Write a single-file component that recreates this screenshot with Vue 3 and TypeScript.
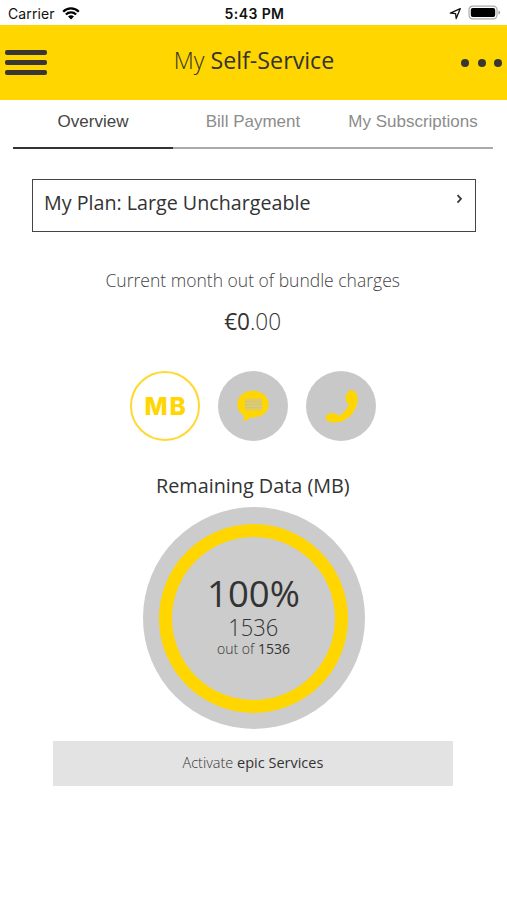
<script setup lang="ts">
interface Tab { label: string; active: boolean }
const tabs: Tab[] = [
  { label: 'Overview', active: true },
  { label: 'Bill Payment', active: false },
  { label: 'My Subscriptions', active: false },
]
</script>

<template>
  <main class="screen">
    <div class="status">
      <div class="carrier">
        <span>Carrier</span>
        <svg width="18" height="13" viewBox="0 0 18 13">
          <path d="M1.2 4.7a11 11 0 0 1 15.6 0M3.9 7.5a7.2 7.2 0 0 1 10.2 0" fill="none" stroke="#000" stroke-width="2.3" />
          <path d="M9 12.6 6 9.6a4.3 4.3 0 0 1 6 0z" />
        </svg>
      </div>
      <span class="time">5:43 PM</span>
      <div class="indicators">
        <svg width="13" height="13" viewBox="0 0 13 13"><path d="M1.3 6.1 11.3 1.6 7.2 11.6 6.6 6.6z" fill="none" stroke="#111" stroke-width="1.3" stroke-linejoin="round" /></svg>
        <svg width="33" height="16" viewBox="0 0 33 16">
          <rect x="1" y="1.2" width="28" height="12.6" rx="3.6" fill="#fff" stroke="#aaa" stroke-width="1.2" />
          <rect x="2.8" y="3" width="24.4" height="9" rx="2" />
          <path d="M30.5 5.6q1.6.5 1.6 1.9t-1.6 1.9z" fill="#999" />
        </svg>
      </div>
    </div>

    <header class="header">
      <button class="menu" aria-label="Menu"><i /><i /><i /></button>
      <h1><span class="fit"><span class="thin">My</span> Self-Service</span></h1>
      <button class="more" aria-label="More"><i /><i /><i /></button>
    </header>

    <nav class="tabs">
      <a v-for="tab in tabs" :key="tab.label" class="tab" :class="{ active: tab.active }">{{ tab.label }}</a>
    </nav>

    <section class="plan">
      <span class="fit">My Plan: Large Unchargeable</span>
      <svg width="7" height="10" viewBox="0 0 7 10"><path d="M1.5 1.2 5 4.8 1.5 8.6" fill="none" stroke="#333" stroke-width="1.7" /></svg>
    </section>

    <p class="charges"><span class="fit">Current month out of bundle charges</span></p>
    <p class="amount"><span class="fit"><b>€0</b>.00</span></p>

    <div class="kinds">
      <button class="kind selected">MB</button>
      <button class="kind" aria-label="Messages">
        <svg width="36" height="36" viewBox="0 0 36 36">
          <path d="M18 2.8c8.7 0 15.7 5.8 15.7 13.5S27 29.500 18 29.500q-1.600 0-3-.2-1.500 3.500-7.500 3.800 2.200-2 1.500-5.500C4.500 25 2.300 21 2.300 16.300 2.300 8.600 9.300 2.800 18 2.800z" fill="#ffd600" />
          <path d="M10 10.500h17v12H10z" fill="#dfcb62" />
          <path d="M10 13.500h17M10 16.500h17M10 19.500h17" stroke="#cdc38b" />
        </svg>
      </button>
      <button class="kind" aria-label="Calls">
        <svg width="36" height="36" viewBox="0 0 36 36"><path d="M27.500 2.300C31.500 1.500 35 5.500 34.600 12 34 24 24 34 12 34.500 6 34.700 2.500 32.500 2.600 29.500 2.700 26.500 5 25.600 9 25.200 12.500 25 14 25.500 15.500 28 20 26 24.500 21 26 16 23 14.500 22 12.500 22.800 9 23.600 5 25 2.800 27.500 2.300z" fill="#ffd600" /></svg>
      </button>
    </div>

    <h2 class="remaining"><span class="fit">Remaining Data (MB)</span></h2>
    <div class="gauge">
      <div class="ring">
        <p class="percent">100%</p>
        <p class="left"><span class="fit">1536</span></p>
        <p class="total">out of <b>1536</b></p>
      </div>
    </div>

    <button class="activate"><span class="fit">Activate <b>epic Services</b></span></button>
  </main>
</template>

<style>
body { margin: 0; background: #fff; }
</style>

<style scoped>
* { box-sizing: border-box; }
.screen { width: 506px; height: 900px; background: #fff; color: #333; font-family: "Open Sans", "Noto Sans", sans-serif; display: flex; flex-direction: column; align-items: center; }
p, h1, h2 { margin: 0; font-weight: 400; }
button { border: 0; padding: 0; background: none; font: inherit; color: inherit; }
.fit { display: inline-block; white-space: nowrap; }
svg { display: block; flex: none; }
.status { width: 507px; height: 25px; flex: none; align-self: flex-start; display: grid; grid-template-columns: 1fr auto 1fr; align-items: center; padding: 1px 6px 0 8px; font: 14px Inter, sans-serif; color: #111; }
.carrier { display: flex; align-items: center; gap: 7px; letter-spacing: .1px; }
.time { font-weight: 600; letter-spacing: .4px; }
.indicators { display: flex; justify-content: flex-end; align-items: center; gap: 6px; }
.header { width: 507px; height: 75px; flex: none; align-self: flex-start; background: #ffd600; display: flex; align-items: center; justify-content: space-between; padding: 0 5px 0 5px; }
.menu { width: 42px; display: flex; flex-direction: column; gap: 4.3px; }
.menu i { height: 5.5px; border-radius: 2px; background: #3a3630; }
.header h1 { font-size: 24px; line-height: 30px; padding: 0 1px 5px 0; }
.header .fit { transform: scaleX(.968); }
.thin { font-weight: 300; }
.more { display: flex; gap: 8.5px; }
.more i { width: 8px; height: 8px; border-radius: 50%; background: #3a3630; }
.tabs { width: 480px; height: 49px; flex: none; display: grid; grid-template-columns: repeat(3, 160px); font: 17px/44px "Liberation Sans", sans-serif; color: #8c8c8c; text-align: center; }
.tab { border-bottom: 2px solid #aaa; }
.tab.active { color: #444; border-color: #333; }
.plan { margin: 30px 0 0 2px; width: 444px; height: 53px; flex: none; border: 1px solid #444; display: flex; justify-content: space-between; padding: 7px 12px 0 11px; font-size: 20.5px; line-height: 30px; }
.plan .fit { transform: scaleX(.96); transform-origin: left; }
.plan svg { margin-top: 7px; }
.charges { margin-top: 33px; font-size: 19px; line-height: 30px; font-weight: 340; color: #444; }
.charges .fit { transform: scaleX(.922); }
.amount { margin-top: 10px; font-size: 23.5px; line-height: 32px; font-weight: 320; }
.amount .fit { transform: scaleX(.96); }
b { font-weight: 500; }
.kinds { margin-top: 34px; display: flex; gap: 18px; }
.kind { width: 70px; height: 70px; border-radius: 50%; background: #c8c8c8; display: flex; align-items: center; justify-content: center; }
.selected { border: 2px solid #ffd92f; background: #fff; color: #ffd600; font: 800 24.5px Inter, sans-serif; letter-spacing: 1.8px; padding-left: 2px; }
.remaining { margin-top: 30px; font-size: 20px; line-height: 30px; }
.remaining .fit { transform: scaleX(.99); }
.gauge { margin: 6px 0 0 1px; width: 222px; height: 222px; flex: none; border-radius: 50%; background: #ccc; display: grid; place-items: center; }
.ring { width: 189px; height: 189px; border: 13px solid #ffd600; border-radius: 50%; text-align: center; padding-top: 34px; }
.percent { font-size: 36.5px; line-height: 44px; }
.left { font-size: 23px; line-height: 25px; font-weight: 330; }
.left .fit { transform: scaleX(.95); }
.total { font-size: 14px; line-height: 17px; font-weight: 330; }
.activate { margin-top: 12px; width: 400px; height: 45px; flex: none; background: #e3e3e3; font-size: 15px; font-weight: 320; padding-bottom: 4px; }
.activate .fit { transform: scaleX(.966); }
</style>
